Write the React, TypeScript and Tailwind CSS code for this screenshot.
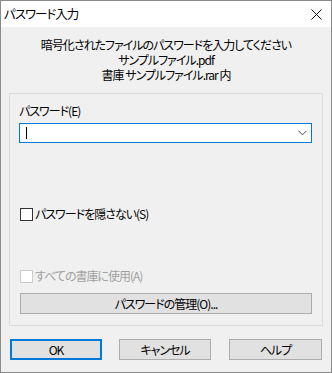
import React from "react";

const font =
  "[font-family:'Noto_Sans_CJK_JP','Noto_Sans',sans-serif] [font-feature-settings:'palt'] tracking-[-1px]";

function Button(d: { label: string; w: string; primary?: boolean }) {
  return (
    <div
      className={
        "h-[21px] flex items-center justify-center bg-[#e1e1e1] text-[12px] text-black " +
        d.w +
        (d.primary ? " border-2 border-[#0078d7]" : " border border-[#adadad]")
      }
    >
      {d.label}
    </div>
  );
}

function CheckRow(d: { label: string; disabled?: boolean }) {
  return (
    <div className="flex items-center h-[16px]">
      <div
        className={
          "w-[13px] h-[13px] bg-white border " +
          (d.disabled ? "border-[#cccccc]" : "border-[#333333]")
        }
      ></div>
      <div
        className={
          "ml-[2px] text-[12px] leading-[16px] " +
          (d.disabled ? "text-[#a0a0a0]" : "text-black")
        }
      >
        {d.label}
      </div>
    </div>
  );
}

export default function App() {
  return (
    <div
      className={
        "w-[332px] h-[373px] border border-[#8a8a8a] flex flex-col bg-[#f0f0f0] " +
        font
      }
    >
      {/* title bar */}
      <div className="h-[26px] bg-white flex items-center justify-between pl-[3px] pr-[9px]">
        <div className="text-[12.5px] text-black">パスワード入力</div>
        <svg width="11" height="11" viewBox="0 0 11 11">
          <path d="M0.5 0.5 L10.5 10.5 M10.5 0.5 L0.5 10.5" stroke="#111" strokeWidth="1" />
        </svg>
      </div>

      <div className="flex-1 flex flex-col px-[8px]">
        <div className="pt-[10px] text-center text-[12px] leading-[15px] text-black">
          <div>暗号化されたファイルのパスワードを入力してください</div>
          <div>サンプルファイル.pdf</div>
          <div>書庫 サンプルファイル.rar 内</div>
        </div>

        {/* group */}
        <div className="mt-[11px] h-[233px] border border-[#dcdcdc] pl-[9px] pr-[10px] pt-[9px] flex flex-col">
          <div className="text-[12px] leading-[16px] text-black">パスワード(E)</div>
          <div className="mt-[4px] h-[20px] bg-white border border-[#0078d7] flex items-center justify-between pl-[6px] pr-[4px]">
            <div className="w-px h-[12px] bg-black"></div>
            <svg width="9" height="6" viewBox="0 0 9 6">
              <path d="M0.5 0.8 L4.5 4.8 L8.5 0.8" stroke="#444" strokeWidth="1" fill="none" />
            </svg>
          </div>
          <div className="mt-[63px] pl-[1px]">
            <CheckRow label="パスワードを隠さない(S)" />
          </div>
          <div className="mt-[46px] pl-[1px]">
            <CheckRow label="すべての書庫に使用(A)" disabled />
          </div>
          <div className="mt-[9px] pl-[1px]">
            <Button label="パスワードの管理(O)..." w="w-[292px]" />
          </div>
        </div>

        <div className="mt-[13px] flex pl-[1px]">
          <Button label="OK" w="w-[92px]" primary />
          <div className="ml-[17px]">
            <Button label="キャンセル" w="w-[92px]" />
          </div>
          <div className="ml-[18px]">
            <Button label="ヘルプ" w="w-[93px]" />
          </div>
        </div>
      </div>
    </div>
  );
}
